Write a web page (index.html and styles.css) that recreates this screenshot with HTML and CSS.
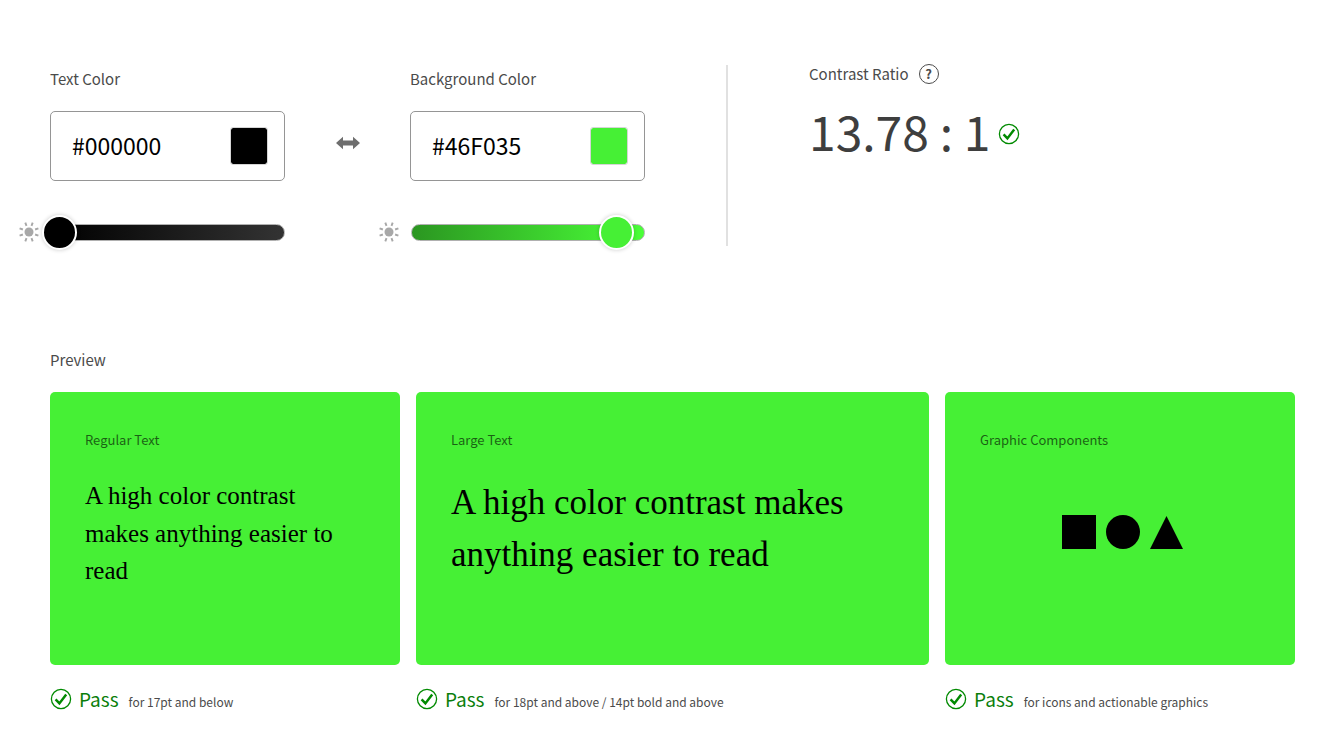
FILE: index.html
```html
<!DOCTYPE html>
<html lang="en">
<head>
<meta charset="utf-8">
<title>Contrast Checker</title>
<meta name="viewport" content="width=device-width, initial-scale=1">
<link rel="stylesheet" href="styles.css">
</head>
<body>
<svg class="sprite" aria-hidden="true">
  <symbol id="check" viewBox="0 0 22 22">
    <circle cx="11" cy="11" r="9.6" fill="none" stroke="#008a00" stroke-width="1.3"/>
    <path d="M5.6 11.4 9.4 15.4 16.2 6.6" fill="none" stroke="#008a00" stroke-width="2.5"/>
  </symbol>
  <symbol id="sun" viewBox="0 0 20 20">
    <circle cx="10" cy="10" r="4.5" fill="#a8a8a8"/>
    <path d="M12.5 3.9 13.7 .6M16.1 7.5 19.4 6.3M16.1 12.5 19.4 13.7M12.5 16.1 13.7 19.4M7.5 16.1 6.3 19.4M3.9 12.5 .6 13.7M3.9 7.5 .6 6.3M7.5 3.9 6.3 .6" fill="none" stroke="#a8a8a8" stroke-width="1.9"/>
  </symbol>
</svg>
<main class="page">
  <section class="checker">
    <div class="color">
      <label class="label" for="text-hex">Text Color</label>
      <div class="field">
        <input class="hex" id="text-hex" type="text" value="#000000">
        <input class="swatch" type="color" value="#000000" aria-label="Pick text color">
      </div>
      <div class="brightness">
        <svg class="sun" aria-hidden="true"><use href="#sun"/></svg>
        <div class="bar bar-text">
          <input class="range range-text" type="range" min="0" max="100" value="0" aria-label="Text brightness">
        </div>
      </div>
    </div>
    <button class="swap" type="button" aria-label="Swap colors">
      <svg class="swap-icon" viewBox="0 0 24 14" aria-hidden="true"><path d="M0 7 7 .8V4.5H17V.8L24 7 17 13.2V9.5H7V13.2Z" fill="#6e6e6e"/></svg>
    </button>
    <div class="color">
      <label class="label" for="background-hex">Background Color</label>
      <div class="field">
        <input class="hex" id="background-hex" type="text" value="#46F035">
        <input class="swatch" type="color" value="#46f035" aria-label="Pick background color">
      </div>
      <div class="brightness">
        <svg class="sun" aria-hidden="true"><use href="#sun"/></svg>
        <div class="bar bar-background">
          <input class="range range-background" type="range" min="0" max="100" value="91" aria-label="Background brightness">
        </div>
      </div>
    </div>
    <div class="result">
      <div class="result-head">
        <span>Contrast Ratio</span>
        <button class="help" type="button" aria-label="About contrast ratio">?</button>
      </div>
      <div class="ratio">
        <span>13.78 : 1</span>
        <svg class="check" role="img" aria-label="Passes"><use href="#check"/></svg>
      </div>
    </div>
  </section>

  <section>
    <h2 class="preview-title">Preview</h2>
    <div class="previews">
      <article>
        <div class="card">
          <h3 class="card-title">Regular Text</h3>
          <p class="regular">A high color contrast makes anything easier to read</p>
        </div>
        <p class="status"><svg class="check" aria-hidden="true"><use href="#check"/></svg><span class="pass">Pass</span><span class="scope">for 17pt and below</span></p>
      </article>
      <article>
        <div class="card">
          <h3 class="card-title">Large Text</h3>
          <p class="large">A high color contrast makes anything easier to read</p>
        </div>
        <p class="status"><svg class="check" aria-hidden="true"><use href="#check"/></svg><span class="pass">Pass</span><span class="scope">for 18pt and above / 14pt bold and above</span></p>
      </article>
      <article>
        <div class="card">
          <h3 class="card-title">Graphic Components</h3>
          <svg class="shapes" viewBox="0 0 122 34" aria-hidden="true"><path d="M0 0H34V34H0Z"/><circle cx="61" cy="17" r="17"/><path d="M104.5 1 121 34H88Z"/></svg>
        </div>
        <p class="status"><svg class="check" aria-hidden="true"><use href="#check"/></svg><span class="pass">Pass</span><span class="scope">for icons and actionable graphics</span></p>
      </article>
    </div>
  </section>
</main>
</body>
</html>
```
FILE: styles.css
```css
* { box-sizing: border-box; }

body {
  margin: 0;
  background: #fff;
  color: #4b4b4b;
  font-family: "Noto Sans CJK SC", "Noto Sans", sans-serif;
  font-size: 15px;
  line-height: 24px;
}

.sprite { position: absolute; width: 0; height: 0; }

.page { padding: 65px 43px 32px 50px; }

.checker {
  display: flex;
  align-items: flex-start;
  margin-bottom: 98px;
}

.color { width: 235px; }

.label { display: block; padding-top: 2px; margin-bottom: 20px; }

.field {
  display: flex;
  align-items: center;
  height: 70px;
  padding: 0 16px 0 21px;
  border: 1px solid #959595;
  border-radius: 5px;
}

.hex {
  flex: 1;
  min-width: 0;
  padding: 0 0 3px;
  border: 0;
  outline: 0;
  background: none;
  color: #000;
  font: inherit;
  font-size: 23px;
  line-height: 32px;
}

.swatch {
  width: 38px;
  height: 38px;
  padding: 0;
  border: 1px solid #d5d5d5;
  border-radius: 3px;
  background: none;
  appearance: none;
}

.swatch::-webkit-color-swatch-wrapper { padding: 0; }
.swatch::-webkit-color-swatch { border: 0; border-radius: 2px; }

.brightness {
  display: flex;
  align-items: center;
  gap: 12px;
  height: 36px;
  margin: 33px 0 0 -31px;
}

.sun { flex: none; width: 20px; height: 20px; }

.bar {
  flex: 1;
  display: flex;
  align-items: center;
  height: 17px;
  border: 1px solid #b0b0b0;
  border-radius: 9px;
}

.bar-text { background: linear-gradient(90deg, #000, #333); }
.bar-background { background: linear-gradient(90deg, #2b9621, #4aff38); }

.range {
  flex: 1;
  min-width: 0;
  height: 35px;
  margin: 0 -10px;
  background: none;
  appearance: none;
}

.range::-webkit-slider-thumb {
  width: 35px;
  height: 35px;
  border: 2px solid #fff;
  border-radius: 50%;
  box-shadow: 0 0 4px rgba(0, 0, 0, 0.2);
  appearance: none;
}

.range-text::-webkit-slider-thumb { background: #000; }
.range-background::-webkit-slider-thumb { background: #46f035; }

.swap {
  width: 125px;
  margin-top: 66px;
  padding: 0;
  border: 0;
  background: none;
  line-height: 0;
}

.swap-icon { width: 24px; height: 24px; }

.result {
  min-height: 181px;
  margin-left: 81px;
  padding-left: 81px;
  border-left: 2px solid #e1e1e1;
}

.result-head { display: flex; align-items: center; gap: 10px; height: 18px; }

.help {
  width: 20px;
  height: 20px;
  padding: 0;
  border: 1px solid #4b4b4b;
  border-radius: 50%;
  background: none;
  color: #4b4b4b;
  font: inherit;
  font-size: 13px;
  font-weight: 700;
  line-height: 18px;
}

.ratio {
  display: flex;
  align-items: center;
  gap: 8px;
  padding-top: 11px;
  color: #3e3e3e;
  font-size: 48px;
  line-height: 72px;
}

.check { flex: none; width: 22px; height: 22px; }
.ratio .check { margin-top: 8px; }

.preview-title { margin: 0 0 20px; font-size: 15px; font-weight: 400; }

.previews {
  display: grid;
  grid-template-columns: 15fr 22fr 15fr;
  gap: 16px;
}

.card {
  min-height: 273px;
  padding: 36px 35px;
  border-radius: 5px;
  background: #46f035;
  color: #000;
}

.card-title {
  margin: 0 0 25px;
  font-size: 13px;
  font-weight: 400;
  line-height: 24px;
  opacity: 0.6;
}

.regular, .large { margin: 0; font-family: "Liberation Serif", serif; }
.regular { font-size: 25px; line-height: 1.5; }
.large { font-size: 35px; line-height: 52px; }

.shapes { display: block; width: 128px; height: 34px; margin: 63px auto 0; padding-left: 6px; }

.status { display: flex; align-items: baseline; margin: 19px 0 0; line-height: 30px; }
.status .check { align-self: center; margin-bottom: 4px; }
.pass { margin: 0 10px 0 7px; color: #0a7e0a; font-size: 19px; }
.scope { font-size: 12px; }
```
